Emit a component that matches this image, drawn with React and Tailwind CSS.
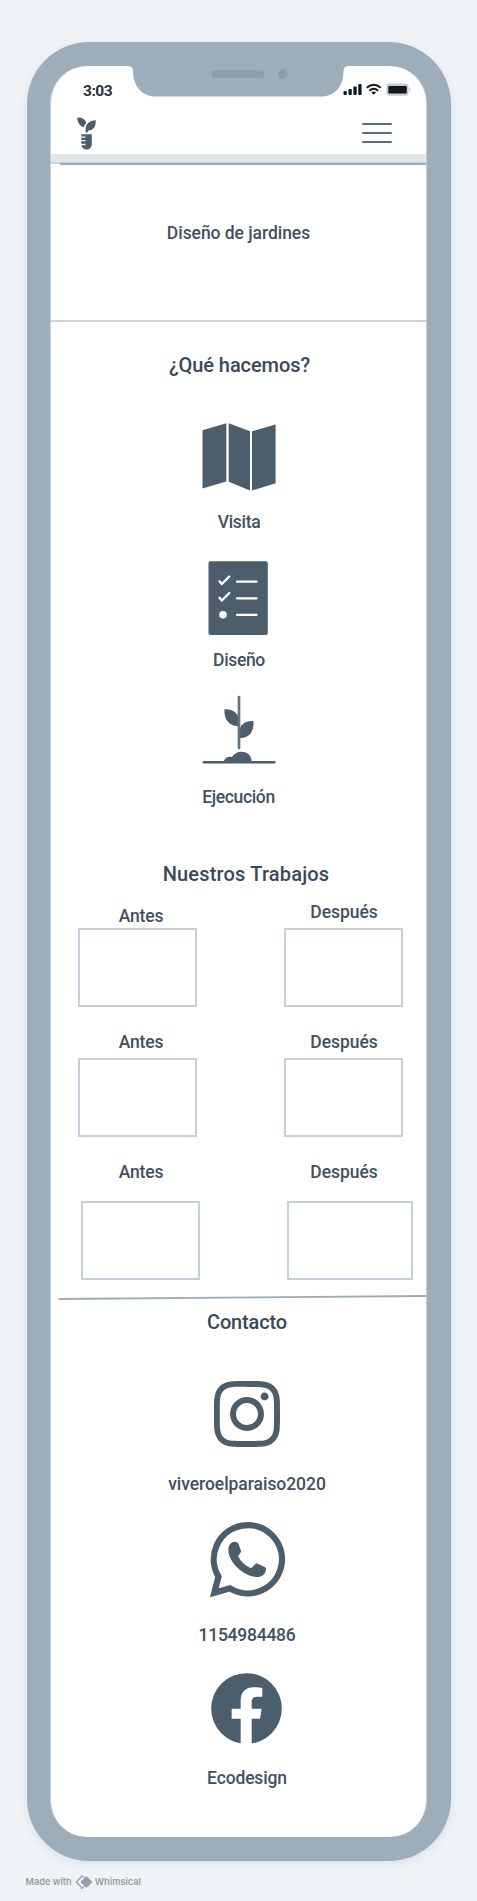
const heading = "font-medium text-[20px] leading-[24px] whitespace-nowrap text-center text-[#3b4956]";
const label = "font-medium text-[17.5px] leading-[20px] whitespace-nowrap text-center text-[#42515e]";

function Notch() {
  return (
    <svg className="absolute left-[77px] top-0" width="220" height="32" viewBox="128 66 220 32">
      <path d="M128 65V66.3C131.500 66.300 133 68 133 71C133 86 142 96.500 156 96.500H321C335 96.500 343.500 86 343.500 71C343.500 68 345 66.300 348 66.300V65Z" fill="#9dadb9" />
      <rect x="211.300" y="70.500" width="53" height="7.400" rx="3.700" fill="#8d9dac" />
      <circle cx="282.700" cy="74.200" r="4.700" fill="#8d9dac" />
    </svg>
  );
}

function StatusIcons() {
  return (
    <svg width="68" height="14" viewBox="343 83 68 14">
      <g fill="#101820">
        <rect x="343.500" y="91" width="3.300" height="4" rx="1" />
        <rect x="348.500" y="89" width="3.300" height="6" rx="1" />
        <rect x="353.400" y="86.500" width="3.300" height="8.500" rx="1" />
        <rect x="358.300" y="84" width="3.300" height="11" rx="1" />
        <path d="M371.300 92.300Q373.700 90.700 376.100 92.300L373.700 94.700Z" />
      </g>
      <g fill="none" stroke="#101820" strokeWidth="1.900">
        <path d="M366.700 87.800Q373.700 81.800 380.700 87.800" />
        <path d="M369.200 90.700Q373.700 87 378.200 90.700" />
      </g>
      <rect x="386.300" y="83.500" width="22.200" height="12.300" rx="3" fill="#cbcbcd" />
      <path d="M409.200 87.500Q410.600 88 410.600 89.700Q410.600 91.300 409.200 91.800Z" fill="#cbcbcd" />
      <rect x="388.300" y="86" width="18.500" height="7.400" rx="1" fill="#101820" />
    </svg>
  );
}

function PlantLogo() {
  return (
    <svg width="20" height="34" viewBox="77 117 20 34" fill="#4c5d6b">
      <path d="M77.300 117.500C82 117 85.500 119.500 86.300 123C85 124.500 84 126 83.800 127.300C79.500 126 77.200 122 77.300 117.500Z" />
      <path d="M95.800 120.300C96 127 93 130.600 87.800 130.700V132.500H85.600V130C85.400 124.500 89 120.500 95.800 120.300Z" />
      <path d="M81.300 134.300H91.800V144C91.800 147.500 89.500 149.500 86.600 149.500C83.800 149.500 81.700 147.800 81.400 145.200H85.500V143.800H81.300V141.300H85.500V139.900H81.300V137.800H85.500V136.500H81.300Z" />
    </svg>
  );
}

function MapIcon() {
  return (
    <svg width="75" height="69" viewBox="202 423 75 69" fill="#4c5d6b">
      <path d="M202.500 430.300L226.300 423.200V481.500L202.500 488.500Z" />
      <path d="M228.700 423.200L250 431.300V490.500L228.700 481.800Z" />
      <path d="M252 431.300L275.600 424.500V483.300L252 490.500Z" />
    </svg>
  );
}

function ChecklistIcon() {
  return (
    <svg width="60" height="75" viewBox="208 561 60 75">
      <rect x="208.500" y="561.300" width="59.300" height="73.700" rx="2" fill="#4c5d6b" />
      <g fill="none" stroke="#fff" strokeWidth="2.300" strokeLinecap="round" strokeLinejoin="round">
        <path d="M219.500 581.300L221.800 584L229.300 576.500" />
        <path d="M219.500 597.800L221.800 600.500L229.300 593" />
        <path d="M237 581.700H256.500M237 598.300H256.500M237 614.800H256.500" />
      </g>
      <circle cx="223" cy="614.800" r="3.800" fill="#fff" />
    </svg>
  );
}

function SproutIcon() {
  return (
    <svg width="74" height="70" viewBox="202 695 74 70">
      <g fill="#4c5d6b">
        <path d="M224.500 709.300C232.500 708.500 238.500 713.500 238.500 719V726C229.500 726.500 223.500 719.500 224.500 709.300Z" />
        <path d="M253.400 721.200C246 720.500 239.500 724.500 239.500 731.500V738C248.500 738.500 254.500 731.500 253.400 721.200Z" />
        <path d="M224 762C224 758 228 756 232 757C235 753 238.500 751.800 241.500 751.800C248 751.800 252 756.500 251.500 762Z" />
      </g>
      <path d="M239 697V748" stroke="#627382" strokeWidth="2.700" strokeLinecap="round" />
      <path d="M204 762.300H274.300" stroke="#4c5d6b" strokeWidth="2.600" strokeLinecap="round" />
    </svg>
  );
}

function InstagramIcon() {
  return (
    <svg width="66" height="66" viewBox="0 0 24 24" fill="#4c5d6b">
      <path d="M12 0C8.740 0 8.333.015 7.053.072 5.775.132 4.905.333 4.140.63c-.789.306-1.459.717-2.126 1.384S.935 3.350.63 4.140C.333 4.905.131 5.775.072 7.053.012 8.333 0 8.740 0 12s.015 3.667.072 4.947c.06 1.277.261 2.148.558 2.913.306.788.717 1.459 1.384 2.126.667.666 1.336 1.079 2.126 1.384.766.296 1.636.499 2.913.558C8.333 23.988 8.740 24 12 24s3.667-.015 4.947-.072c1.277-.06 2.148-.262 2.913-.558.788-.306 1.459-.718 2.126-1.384.666-.667 1.079-1.335 1.384-2.126.296-.765.499-1.636.558-2.913.06-1.280.072-1.687.072-4.947s-.015-3.667-.072-4.947c-.06-1.277-.262-2.149-.558-2.913-.306-.789-.718-1.459-1.384-2.126C21.319 1.347 20.651.935 19.860.63c-.765-.297-1.636-.499-2.913-.558C15.667.012 15.260 0 12 0zm0 2.160c3.203 0 3.585.016 4.850.071 1.170.055 1.805.249 2.227.415.562.217.960.477 1.382.896.419.420.679.819.896 1.381.164.422.360 1.057.413 2.227.057 1.266.070 1.646.070 4.850s-.015 3.585-.074 4.850c-.061 1.170-.256 1.805-.421 2.227-.224.562-.479.960-.899 1.382-.419.419-.824.679-1.380.896-.420.164-1.065.360-2.235.413-1.274.057-1.649.070-4.859.070-3.211 0-3.586-.015-4.859-.074-1.171-.061-1.816-.256-2.236-.421-.569-.224-.960-.479-1.379-.899-.421-.419-.690-.824-.900-1.380-.165-.420-.359-1.065-.420-2.235-.045-1.260-.061-1.649-.061-4.844 0-3.196.016-3.586.061-4.861.061-1.170.255-1.814.420-2.234.210-.570.479-.960.900-1.381.419-.419.810-.689 1.379-.898.420-.166 1.051-.361 2.221-.421 1.275-.045 1.650-.060 4.859-.060l.045.030zm0 3.678c-3.405 0-6.162 2.760-6.162 6.162 0 3.405 2.760 6.162 6.162 6.162 3.405 0 6.162-2.760 6.162-6.162 0-3.405-2.760-6.162-6.162-6.162zM12 16c-2.210 0-4-1.790-4-4s1.790-4 4-4 4 1.790 4 4-1.790 4-4 4zm7.846-10.405c0 .795-.646 1.440-1.440 1.440-.795 0-1.440-.646-1.440-1.440 0-.794.646-1.439 1.440-1.439.793-.001 1.440.645 1.440 1.439z" />
    </svg>
  );
}

function WhatsAppIcon() {
  return (
    <svg width="76" height="77" viewBox="209 1521 76 77">
      <path d="M230 1588.300A34.100 34.100 0 1 0 218.500 1576.600L214.300 1592.700Z" fill="none" stroke="#4c5d6b" strokeWidth="6.200" />
      <path
        transform="translate(150 1360) scale(.33333)"
        d="M235 570C236 553 244 545 254 545C262 545 265 549 267 556L273 572C274 578 265 586 264 589C273 606 286 617 302 624C307 624 312 613 318 611C322 610 325 612 329 614L344 621C349 624 349 628 347 633C344 646 333 651 320 651C282 649 236 609 235 570Z"
        fill="#4c5d6b"
      />
    </svg>
  );
}

function FacebookIcon() {
  return (
    <svg width="71" height="71" viewBox="185 188 213 213">
      <circle cx="291.500" cy="294.500" r="106" fill="#4c5d6b" />
      <path d="M274 402V325H247V295H274V271C274 245 289 231 313 231C325 231 334 232 339 233V259H325C311 259 307 266 307 276V295H337L332 325H307V402Z" fill="#fff" />
    </svg>
  );
}

function WhimsicalMark() {
  return (
    <svg width="18" height="14" viewBox="75 1875 18 14">
      <path d="M81.500 1876.800L76.300 1882L81.500 1887.200" fill="none" stroke="#93a0aa" strokeWidth="1.300" strokeLinejoin="round" />
      <path d="M80.800 1876.300Q81.700 1875.500 82.600 1876.300L84 1877.700M80.800 1887.700Q81.700 1888.500 82.600 1887.700L84 1886.300" fill="none" stroke="#93a0aa" strokeWidth="1.200" />
      <rect x="82.100" y="1877.700" width="8.600" height="8.600" rx="1" transform="rotate(45 86.400 1882)" fill="#93a0aa" />
    </svg>
  );
}

function Frame({ className }) {
  return <div className={"h-[79px] border-2 border-[#c4d0dc] " + className} />;
}

function Captions({ className, first }) {
  return (
    <div className={"flex items-start pl-[60px] " + className}>
      <p className={label + " w-[60px] tracking-[-0.150px] " + (first ? "mt-[4px]" : "")}>Antes</p>
      <p className={label + " ml-[128px] w-[90px] tracking-[-0.050px]"}>Después</p>
    </div>
  );
}

function Header() {
  return (
    <header className="relative h-[88px]">
      <Notch />
      <div className="flex h-[46px] items-start justify-between pt-[17px] pl-[32px] pr-[15px]">
        <span className="-mt-px text-[15.5px] leading-[18px] font-bold tracking-[-0.500px] text-[#26303a]">3:03</span>
        <StatusIcons />
      </div>
      <div className="flex items-start justify-between pt-[5px] pl-[26px] pr-[34px]">
        <PlantLogo />
        <div className="flex w-[30px] flex-col gap-[7px] pt-[6px]">
          <span className="h-[2px] rounded bg-[#5a6d7c]" />
          <span className="h-[2px] rounded bg-[#5a6d7c]" />
          <span className="h-[2px] rounded bg-[#5a6d7c]" />
        </div>
      </div>
    </header>
  );
}

export default function App() {
  return (
    <div className="h-[1901px] w-[477px] bg-[#eff3f6] pt-[42px] font-['Roboto',sans-serif]">
      <div className="ml-[27px] h-[1819px] w-[424px] rounded-[62px] bg-[#9dadb9] py-[24px] pr-[24px] pl-[23px] shadow-[0_3px_8px_rgba(60,80,100,0.100)]">
        <main className="flex h-[1771px] flex-col overflow-hidden rounded-[37px] border-x border-[#c5d0d9] bg-white">
          <Header />
          <div className="h-[8px] bg-[#e2e7eb]" />
          <section className="h-[160px] border-y-2 border-[#c9d4de]">
            <div className="-mt-px ml-[9px] h-[2px] bg-[#9bacb9]" />
            <p className={label + " mt-[58px] tracking-[-0.050px]"}>Diseño de jardines</p>
          </section>

          <section className="flex flex-col items-center">
            <h2 className={heading + " mt-[31px] ml-[2px] tracking-[-0.080px]"}>¿Qué hacemos?</h2>
            <div className="mt-[46px] ml-[2px]"><MapIcon /></div>
            <p className={label + " mt-[20px] ml-[1px] tracking-[-0.300px]"}>Visita</p>
            <div className="mt-[29px] mr-[1px]"><ChecklistIcon /></div>
            <p className={label + " mt-[14px] ml-[1px] tracking-[-0.350px]"}>Diseño</p>
            <div className="mt-[25px]"><SproutIcon /></div>
            <p className={label + " mt-[22px] tracking-[-0.350px]"}>Ejecución</p>
          </section>

          <section className="mt-[55px]">
            <h2 className={heading + " pl-[15px] tracking-[0.180px]"}>Nuestros Trabajos</h2>
            <Captions className="mt-[16px] h-[26px]" first />
            <div className="flex gap-[87px] pl-[27px]">
              <Frame className="w-[119px]" />
              <Frame className="w-[119px]" />
            </div>
            <Captions className="mt-[25px] h-[26px]" />
            <div className="flex gap-[87px] pl-[27px]">
              <Frame className="w-[119px]" />
              <Frame className="w-[119px]" />
            </div>
            <Captions className="mt-[25px] h-[39px]" />
            <div className="flex gap-[87px] pl-[30px]">
              <Frame className="w-[119px]" />
              <Frame className="w-[126px]" />
            </div>
            <svg className="mt-[14px] block" width="375" height="8" viewBox="51 1294 375 8">
              <path d="M58.500 1299L427 1296" stroke="#9bacb9" strokeWidth="1.800" />
            </svg>
          </section>

          <section className="flex flex-col items-center pl-[17px]">
            <h2 className={heading + " mt-[8px] tracking-[-0.150px]"}>Contacto</h2>
            <div className="mt-[47px]"><InstagramIcon /></div>
            <p className={label + " mt-[27px] tracking-[-0.050px]"}>viveroelparaiso2020</p>
            <div className="mt-[27px] mr-[1px]"><WhatsAppIcon /></div>
            <p className={label + " mt-[27px] tracking-[-0.250px]"}>1154984486</p>
            <div className="mt-[28px] mr-[1px]"><FacebookIcon /></div>
            <p className={label + " mt-[24px] tracking-[-0.150px]"}>Ecodesign</p>
          </section>
        </main>
      </div>
      <footer className="mt-[14px] ml-[25.5px] flex h-[14px] items-center font-['Inter',sans-serif] text-[9.200px] leading-[14px] font-semibold text-[#93a0aa]">
        <span>Made with</span>
        <span className="mr-[2px] ml-[3px]"><WhimsicalMark /></span>
        <span>Whimsical</span>
      </footer>
    </div>
  );
}
